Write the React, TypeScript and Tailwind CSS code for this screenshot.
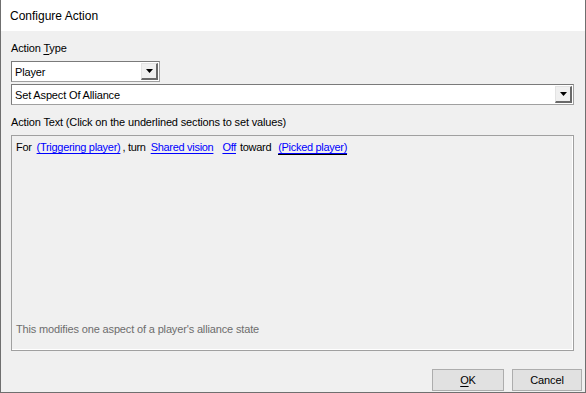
import React from 'react';

const font = { fontFamily: '"Liberation Sans", Arial, sans-serif' };

const DropArrow: React.FC = () => (
  <div className="w-[17px] h-[17px] bg-[#f0f0f0] border-t border-l border-t-[#e3e3e3] border-l-[#e3e3e3] border-b-2 border-r-2 border-b-[#696969] border-r-[#696969] flex items-center justify-center">
    <svg width="7" height="4" viewBox="0 0 7 4">
      <path d="M0 0h7L3.5 4z" fill="#000" />
    </svg>
  </div>
);

const Combo: React.FC<{ value: string; className?: string }> = ({ value, className }) => (
  <div className={`h-[21px] bg-white border border-t-[#7a7a7a] border-l-[#7a7a7a] border-b-[#a0a0a0] border-r-[#a0a0a0] flex items-center justify-between pl-[3px] pr-[1px] ${className ?? ''}`}>
    <span className="leading-[14px]">{value}</span>
    <DropArrow />
  </div>
);

const Link: React.FC<{ children: React.ReactNode; className?: string }> = ({ children, className }) => (
  <span className={`text-[#0000ff] underline underline-offset-[2px] ${className ?? ''}`}>{children}</span>
);

export default function App() {
  return (
    <div
      className="w-[586px] h-[393px] bg-[#f0f0f0] border-l border-r border-b border-[#6f6f6f] flex flex-col text-black"
      style={font}
    >
      <div className="h-[31px] bg-white pl-[9px] flex items-center text-[12px]">Configure Action</div>

      <div className="flex-1 flex flex-col pl-[10px] text-[11px] tracking-[-0.15px] leading-[14px]">
        <div className="mt-[10px]">
          Action <span className="underline underline-offset-[2px]">T</span>ype
        </div>
        <Combo value="Player" className="w-[149px] mt-[6px]" />
        <Combo value="Set Aspect Of Alliance" className="w-[563px] mt-[2px]" />

        <div className="mt-[10px]">Action Text (Click on the underlined sections to set values)</div>

        <div className="mt-[6px] h-[216px] w-[563px] border border-[#a0a0a0] shadow-[inset_-1px_-1px_0_#ffffff] flex flex-col justify-between pl-[4px] pt-[4px] pb-[14px]">
          <div className="flex items-baseline tracking-[-0.3px]">
            <span>For</span>
            <Link className="ml-[5px]">(Triggering player)</Link>
            <span className="ml-[2px]">, turn</span>
            <Link className="ml-[5px]">Shared vision</Link>
            <Link className="ml-[9px]">Off</Link>
            <span className="ml-[4px]">toward</span>
            <span className="ml-[7px] border-b border-black">
              <Link>(Picked player)</Link>
            </span>
          </div>
          <div className="text-[#6d6d6d]">This modifies one aspect of a player's alliance state</div>
        </div>

        <div className="mt-[18px] flex justify-end gap-[8px] pr-[3px]">
          <button className="w-[72px] h-[22px] bg-[#e1e1e1] border border-[#adadad] text-[11px]">
            <span className="underline underline-offset-[2px]">O</span>K
          </button>
          <button className="w-[70px] h-[22px] bg-[#e1e1e1] border border-[#adadad] text-[11px]">Cancel</button>
        </div>
      </div>
    </div>
  );
}
